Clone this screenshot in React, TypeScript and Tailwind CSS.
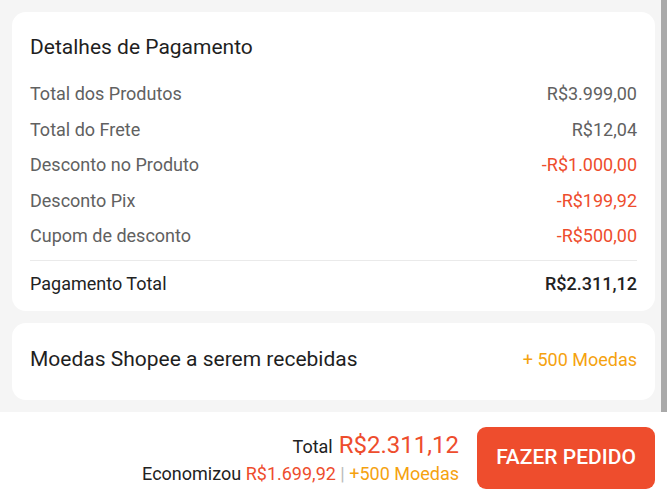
import React from 'react';

const rows: { label: string; value: string; discount?: boolean }[] = [
  { label: 'Total dos Produtos', value: 'R$3.999,00' },
  { label: 'Total do Frete', value: 'R$12,04' },
  { label: 'Desconto no Produto', value: '-R$1.000,00', discount: true },
  { label: 'Desconto Pix', value: '-R$199,92', discount: true },
  { label: 'Cupom de desconto', value: '-R$500,00', discount: true },
];

export default function App() {
  return (
    <div className="w-[667px] h-[500px] bg-[#f5f5f5] flex flex-col overflow-hidden" style={{ fontFamily: 'Roboto, "Noto Sans", sans-serif' }}>
      {/* Scrollable area */}
      <div className="flex flex-1">
        <div className="flex-1 pl-[12px] pr-[6px] pt-[12px] flex flex-col gap-[12px]">
          {/* Payment details */}
          <div className="bg-white rounded-[14px] px-[18px] pt-[22px] pb-[4px]">
            <h2 className="text-[21px] leading-[26px] text-[#1f1f1f]">Detalhes de Pagamento</h2>
            <div className="mt-[16px]">
              {rows.map(r => (
                <div key={r.label} className="h-[35.5px] flex items-center justify-between text-[18px]">
                  <span className="text-[#616161]">{r.label}</span>
                  <span className={r.discount ? 'text-[#ee4d2d]' : 'text-[#616161]'}>{r.value}</span>
                </div>
              ))}
            </div>
            <div className="mt-[6px] border-t border-[#eaeaea] h-[47px] flex items-center justify-between text-[18px] text-[#222]">
              <span>Pagamento Total</span>
              <span className="font-medium">R$2.311,12</span>
            </div>
          </div>

          {/* Coins */}
          <div className="bg-white rounded-[14px] px-[18px] h-[77px] pb-[3px] flex items-center justify-between">
            <span className="text-[21px] text-[#1f1f1f]">Moedas Shopee a serem recebidas</span>
            <span className="text-[18px] text-[#f5a20f]">+ 500 Moedas</span>
          </div>
        </div>
        <div className="w-[6px] bg-[#a9a9a9]" />
      </div>

      {/* Footer */}
      <div className="h-[88px] bg-white flex items-center justify-end pr-[12px] pt-[4px] gap-[18px]">
        <div className="flex flex-col items-end">
          <div className="flex items-baseline gap-[6px] leading-[30px]">
            <span className="text-[18px] text-[#222]">Total</span>
            <span className="text-[24px] text-[#ee4d2d]">R$2.311,12</span>
          </div>
          <div className="text-[18px] leading-[24px] text-[#222]">
            Economizou <span className="text-[#ee4d2d]">R$1.699,92</span>
            <span className="text-[#bbb]"> | </span>
            <span className="text-[#f5a20f]">+500 Moedas</span>
          </div>
        </div>
        <button className="w-[178px] h-[62px] rounded-[9px] bg-[#ee4d2d] text-white text-[21px] font-medium">FAZER PEDIDO</button>
      </div>
    </div>
  );
}
